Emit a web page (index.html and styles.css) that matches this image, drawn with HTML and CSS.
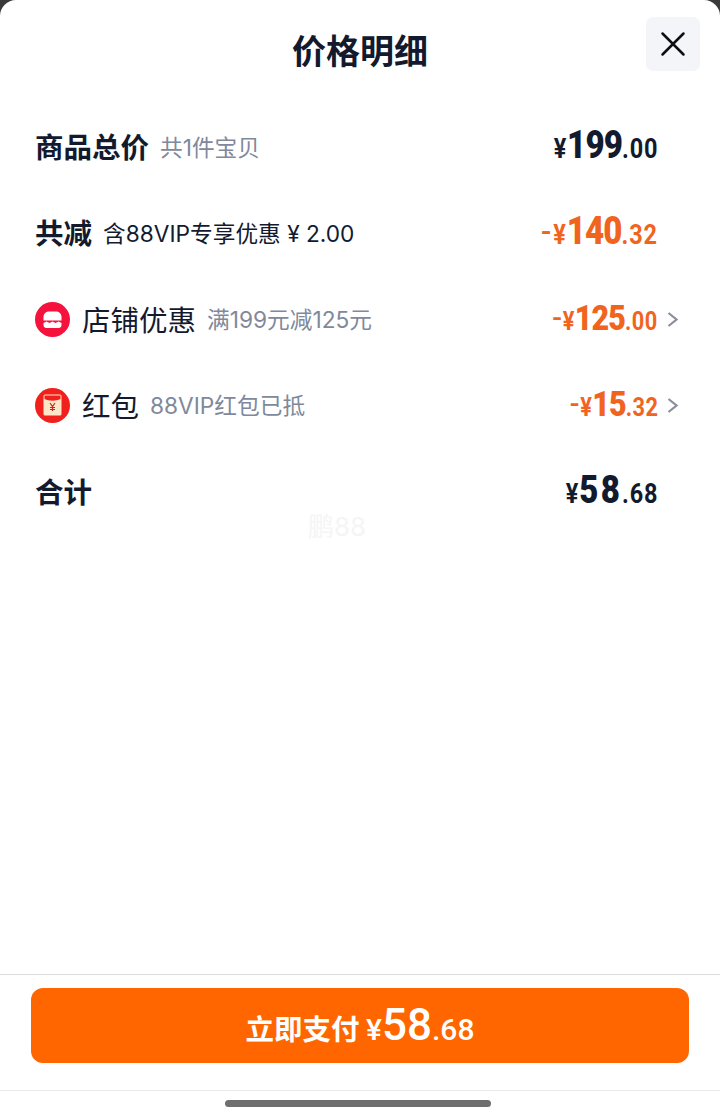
FILE: index.html
```html
<!DOCTYPE html>
<html lang="zh-CN">
<head>
    <meta charset="UTF-8">
    <meta name="viewport" content="width=device-width, initial-scale=1.0">
    <title>价格明细</title>
    <link rel="stylesheet" href="styles.css">
</head>

<body>
<div class="sheet">
    <div class="header">
        <h1>价格明细</h1>
        <button class="close" aria-label="关闭">
            <svg width="26" height="26" viewBox="0 0 26 26"><path d="M2.500 2.500L23.500 23.500M23.500 2.500L2.500 23.500" stroke="#0d0f14" stroke-width="2.500" fill="none" stroke-linecap="round"/></svg>
        </button>
    </div>

    <div class="rows">
        <div class="row">
            <span class="label bold">商品总价</span>
            <span class="note">共1件宝贝</span>
            <span class="price"><i>¥</i><b>199</b><i>.00</i></span>
            <span class="arrow"></span>
        </div>
        <div class="row">
            <span class="label bold">共减</span>
            <span class="note dark">含88VIP专享优惠 ¥ 2.00</span>
            <span class="price orange"><i class="minus">-</i><i>¥</i><b>140</b><i>.32</i></span>
            <span class="arrow"></span>
        </div>
        <div class="row">
            <svg class="badge" width="35" height="35" viewBox="0 0 35 35">
                <circle cx="17.500" cy="17.500" r="17.500" fill="#f5123d"/>
                <path d="M8.500 18.500V15c0-3.500 2.500-5.500 6-5.500h6c3.500 0 6 2 6 5.500v3.500z" fill="#fff"/>
                <path d="M8.500 21l3-1.500 3 1.500 3-1.500 3 1.500 3-1.500 3 1.500v2c0 1.700-1.300 3-3 3h-12c-1.700 0-3-1.300-3-3z" fill="#fff"/>
            </svg>
            <span class="label">店铺优惠</span>
            <span class="note">满199元减125元</span>
            <span class="price orange small"><i class="minus">-</i><i>¥</i><b>125</b><i>.00</i></span>
            <span class="arrow"><svg width="11" height="15" viewBox="0 0 11 15"><path d="M1.500 1L9.500 7.500 1.500 14" stroke="#8a8f9b" stroke-width="2.200" fill="none"/></svg></span>
        </div>
        <div class="row">
            <svg class="badge" width="35" height="35" viewBox="0 0 35 35">
                <circle cx="17.500" cy="17.500" r="17.500" fill="#f2201c"/>
                <rect x="8.500" y="6.500" width="18" height="21" rx="1.500" fill="#fde6c8"/>
                <path d="M9.500 7.500h16v3.500c-5 2.200-11 2.200-16 0z" fill="#f2201c"/>
                <path d="M15 15l2.500 3.500 2.500-3.500M17.500 18.500v4.500M15 19.500h5M15 21.500h5" stroke="#b5301f" stroke-width="1.200" fill="none"/>
            </svg>
            <span class="label">红包</span>
            <span class="note">88VIP红包已抵</span>
            <span class="price orange small"><i class="minus">-</i><i>¥</i><b>15</b><i>.32</i></span>
            <span class="arrow"><svg width="11" height="15" viewBox="0 0 11 15"><path d="M1.500 1L9.500 7.500 1.500 14" stroke="#8a8f9b" stroke-width="2.200" fill="none"/></svg></span>
        </div>
        <div class="row">
            <span class="label bold">合计</span>
            <span class="price total"><i>¥</i><b>58</b><i>.68</i></span>
            <span class="arrow"></span>
        </div>
        <div class="mark">鹏88</div>
    </div>

    <div class="footer">
        <button class="pay">立即支付 <i>¥</i><b>58</b><i>.68</i></button>
    </div>
    <div class="home"><span></span></div>
</div>
</body>

</html>
```

FILE: styles.css
```css
html,
body {
    margin: 0;
    padding: 0;
    background: #3a3a3a;
}

body {
    width: 720px;
    height: 1119px;
    overflow: hidden;
    font-family: "Inter", "Noto Sans CJK SC", sans-serif;
    color: #131a2e;
}

.sheet {
    height: 1119px;
    background: #fff;
    border-radius: 16px 16px 0 0;
    display: flex;
    flex-direction: column;
}

.header {
    height: 103px;
    flex: none;
    position: relative;
    box-sizing: border-box;
    padding-top: 30px;
}

h1 {
    margin: 0;
    font-size: 34px;
    line-height: 44px;
    font-weight: 700;
    text-align: center;
}

.close {
    position: absolute;
    top: 17px;
    right: 20px;
    width: 54px;
    height: 54px;
    border: 0;
    padding: 0;
    border-radius: 7px;
    background: #f4f5f8;
    display: flex;
    align-items: center;
    justify-content: center;
}

.rows {
    flex: 1;
    position: relative;
}

.row {
    height: 86.250px;
    box-sizing: border-box;
    padding: 0 40px 0 35px;
    display: flex;
    align-items: center;
}

.label {
    font-size: 28.500px;
    line-height: 40px;
    padding-top: 4px;
}

.bold {
    font-weight: 700;
}

.badge {
    flex: none;
    margin: 2px 12px 0 0;
}

.note {
    margin-left: 11px;
    font-size: 22.700px;
    color: #7f899b;
}

.dark {
    color: #131a2e;
}

.price {
    margin: 0 -1px 0 auto;
    display: inline-block;
    position: relative;
    top: -1px;
    font-family: "Roboto", sans-serif;
    font-weight: 700;
    white-space: nowrap;
    color: #131a2e;
    transform: scaleX(0.87);
    transform-origin: right center;
}

.price i {
    font-style: normal;
    font-size: 27px;
    letter-spacing: 1px;
}

.price b {
    font-size: 38px;
    letter-spacing: -1px;
}

.price .minus {
    font-size: 38px;
    font-weight: 400;
    margin-right: 2px;
}

.orange {
    color: #f0641e;
}

.small b {
    font-size: 35px;
}

.small i {
    font-size: 25px;
    letter-spacing: 0.500px;
}

.small .minus {
    font-size: 36px;
    margin-right: 1px;
}

.total b {
    letter-spacing: 2.500px;
}

.arrow {
    flex: none;
    width: 22px;
    display: flex;
    justify-content: flex-end;
    box-sizing: border-box;
    padding-right: 1px;
    margin: 1px 1px 0 0;
}

.mark {
    position: absolute;
    left: 308px;
    top: 407px;
    font-size: 26px;
    line-height: 34px;
    color: #f5f5f5;
}

.footer {
    flex: none;
    height: 117px;
    box-sizing: border-box;
    padding: 13px 31px 0;
    border-top: 1px solid #dcdcdc;
    border-bottom: 1px solid #ececec;
}

.pay {
    width: 100%;
    height: 75px;
    border: 0;
    padding: 0 0 2px;
    border-radius: 12px;
    background: #ff6600;
    color: #fff;
    font-family: "Noto Sans CJK SC", sans-serif;
    font-size: 28.500px;
    font-weight: 700;
}

.pay i {
    font-style: normal;
    font-family: "Roboto", sans-serif;
    font-weight: 500;
    font-size: 30px;
}

.pay b {
    font-family: "Roboto", sans-serif;
    font-weight: 500;
    font-size: 44px;
}

.home {
    flex: none;
    height: 28px;
    display: flex;
    justify-content: center;
    padding-right: 4px;
}

.home span {
    width: 266px;
    height: 7px;
    margin-top: 9px;
    border-radius: 4px;
    background: #6f6f6f;
}
```
